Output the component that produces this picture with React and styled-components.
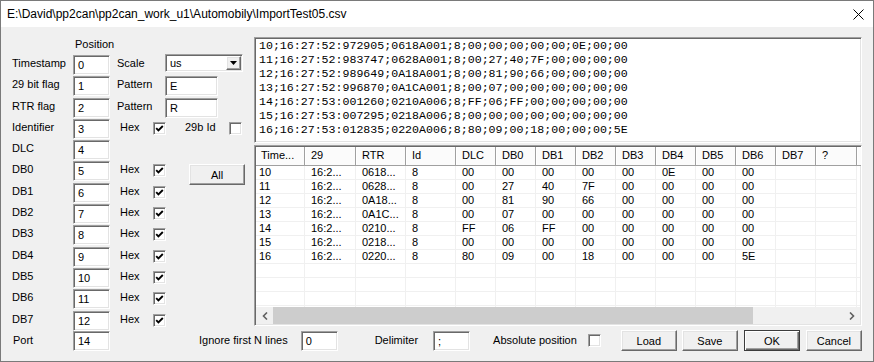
import React from 'react'
import styled, { createGlobalStyle, css } from 'styled-components'

// classic 3D borders
const sunken = css`
  border: 1px solid;
  border-color: #a0a0a0 #fff #fff #a0a0a0;
  box-shadow: inset 1px 1px 0 #696969, inset -1px -1px 0 #e3e3e3;
`
const raised = css`
  border: 1px solid;
  border-color: #fff #696969 #696969 #fff;
  box-shadow: inset -1px -1px 0 #a0a0a0, inset 1px 1px 0 #e3e3e3;
  background: #f0f0f0;
`

const GlobalStyle = createGlobalStyle`
  html, body { margin: 0; padding: 0; background: #fff; }
  * { box-sizing: border-box; }
`

const Window = styled.div`
  width: 874px;
  height: 362px;
  border: 1px solid #7a7a7a;
  display: flex;
  flex-direction: column;
  background: #f0f0f0;
  color: #000;
  font-family: 'Liberation Sans', Arial, sans-serif;
  font-size: 11px;
  overflow: hidden;
`
const TitleBar = styled.div`
  height: 26px;
  flex-shrink: 0;
  background: #fff;
  display: flex;
  align-items: center;
  justify-content: space-between;
  padding: 0 9px 0 6px;
  font-size: 12px;
`
const Body = styled.div`
  flex: 1;
  display: flex;
  flex-direction: column;
  padding: 10px 11px 0 11px;
`
const Top = styled.div`
  display: flex;
  height: 293px;
`
const LeftForm = styled.div`
  width: 242px;
  display: flex;
  flex-direction: column;
`
const PositionHead = styled.div`
  height: 18px;
  line-height: 14px;
  padding-left: 63px;
  flex-shrink: 0;
`
const FormRow = styled.div`
  display: flex;
  align-items: flex-start;
  height: 21.3px;
  flex-shrink: 0;
`
const RowLabel = styled.div`
  width: ${p => p.$w || 61}px;
  padding-left: ${p => p.$pl || 0}px;
  line-height: 17px;
  white-space: nowrap;
`
const Caption = styled.div`
  width: ${p => p.$w}px;
  margin-left: ${p => p.$ml || 0}px;
  line-height: 17px;
  white-space: nowrap;
`
const TextField = styled.div`
  ${sunken};
  background: #fff;
  width: ${p => p.$w || 37}px;
  height: 20px;
  padding: 2px 0 0 4px;
  line-height: 14px;
  margin-left: ${p => p.$ml || 0}px;
  flex-shrink: 0;
`
const Box = styled.div`
  ${sunken};
  background: #fff;
  width: 13px;
  height: 13px;
  margin-top: ${p => (p.$flat ? 0 : 3)}px;
  margin-left: ${p => p.$ml || 0}px;
  display: flex;
  align-items: center;
  justify-content: center;
  flex-shrink: 0;
`
const Dropdown = styled.div`
  ${sunken};
  background: #fff;
  width: 78px;
  height: 18px;
  margin-top: -1px;
  display: flex;
  align-items: center;
  justify-content: space-between;
  padding: 0 1px 0 4px;
`
const DropButton = styled.div`
  ${raised};
  width: 15px;
  height: 14px;
  display: flex;
  align-items: center;
  justify-content: center;
`
const PushButton = styled.div`
  ${raised};
  width: 56px;
  height: 21px;
  display: flex;
  align-items: center;
  justify-content: center;
  margin-left: ${p => p.$ml || 0}px;
  margin-top: ${p => p.$mt || 0}px;
  flex-shrink: 0;
  ${p =>
    p.$default &&
    css`
      border-color: #3c3c3c;
      box-shadow: inset 1px 1px 0 #fff, inset -1px -1px 0 #696969,
        inset -2px -2px 0 #a0a0a0;
    `}
`
const RightPanel = styled.div`
  width: 608px;
  display: flex;
  flex-direction: column;
  gap: 2px;
`
const TextBox = styled.div`
  ${sunken};
  background: #fff;
  height: 106px;
  padding: 1px 0 0 4px;
  font-family: 'Liberation Mono', 'Courier New', monospace;
  font-size: 11.6px;
  line-height: 14px;
  white-space: pre;
  overflow: hidden;
`
const ListView = styled.div`
  ${sunken};
  background: #fff;
  height: 181px;
  padding: 1px;
  display: flex;
  flex-direction: column;
  overflow: hidden;
`
const COLS = [49, 51, 50, 50, 40, 40, 40, 40, 40, 40, 40, 40, 40, 41]
const gridCols = COLS.map(w => w + 'px').join(' ') + ' 1fr'

const HeaderRow = styled.div`
  display: grid;
  grid-template-columns: ${gridCols};
  height: 19px;
  flex-shrink: 0;
`
const HeadCell = styled.div`
  border-right: 1px solid #a0a0a0;
  border-bottom: 1px solid #a0a0a0;
  box-shadow: inset 1px 1px 0 #fff;
  background: #fbfbfb;
  padding-left: ${p => (p.$first ? 5 : 6)}px;
  line-height: 17px;
  white-space: nowrap;
  overflow: hidden;
`
const Rows = styled.div`
  height: 141px;
  flex-shrink: 0;
  overflow: hidden;
`
const DataRow = styled.div`
  display: grid;
  grid-template-columns: ${gridCols};
  height: 14px;
`
const Cell = styled.div`
  border-right: 1px solid #f0f0f0;
  border-bottom: 1px solid #f0f0f0;
  padding-left: ${p => (p.$first ? 3 : 6)}px;
  line-height: 13px;
  white-space: nowrap;
  overflow: hidden;
`
const HScroll = styled.div`
  height: 17px;
  flex-shrink: 0;
  display: flex;
  background: #f0f0f0;
`
const ScrollArrow = styled.div`
  width: 17px;
  display: flex;
  align-items: center;
  justify-content: center;
`
const Track = styled.div`
  flex: 1;
  display: flex;
`
const Thumb = styled.div`
  width: 480px;
  background: #cdcdcd;
`
const BottomBar = styled.div`
  display: flex;
  align-items: center;
  height: 21px;
`

const LINES = [
  '10;16:27:52:972905;0618A001;8;00;00;00;00;00;0E;00;00',
  '11;16:27:52:983747;0628A001;8;00;27;40;7F;00;00;00;00',
  '12;16:27:52:989649;0A18A001;8;00;81;90;66;00;00;00;00',
  '13;16:27:52:996870;0A1CA001;8;00;07;00;00;00;00;00;00',
  '14;16:27:53:001260;0210A006;8;FF;06;FF;00;00;00;00;00',
  '15;16:27:53:007295;0218A006;8;00;00;00;00;00;00;00;00',
  '16;16:27:53:012835;0220A006;8;80;09;00;18;00;00;00;5E',
]
const HEADERS = ['Time...', '29', 'RTR', 'Id', 'DLC', 'DB0', 'DB1', 'DB2', 'DB3', 'DB4', 'DB5', 'DB6', 'DB7', '?', '']

const clip = s => s.slice(0, 4) + '...'
const tableRows = LINES.map(l => {
  const f = l.split(';')
  return [f[0], clip(f[1]), clip(f[2]), ...f.slice(3), '', '']
})
while (tableRows.length < 11) tableRows.push(Array(15).fill(''))

const Check = () => (
  <svg width='9' height='9' viewBox='0 0 9 9'>
    <polyline points='1.2,4.2 3.4,6.4 7.8,2' fill='none' stroke='#000' strokeWidth='1.9' />
  </svg>
)

const CloseIcon = () => (
  <svg width='11' height='11' viewBox='0 0 11 11'>
    <path d='M0.5 0.5 L10.5 10.5 M10.5 0.5 L0.5 10.5' stroke='#000' strokeWidth='1' />
  </svg>
)

const Chevron = ({ right }) => (
  <svg width='6' height='8' viewBox='0 0 6 8'>
    <polyline
      points={right ? '1,0.5 4.5,4 1,7.5' : '5,0.5 1.5,4 5,7.5'}
      fill='none'
      stroke='#606060'
      strokeWidth='1.6'
    />
  </svg>
)

const DB_ROWS = [
  ['DB0', '5'],
  ['DB1', '6'],
  ['DB2', '7'],
  ['DB3', '8'],
  ['DB4', '9'],
  ['DB5', '10'],
  ['DB6', '11'],
  ['DB7', '12'],
]

export default function App() {
  return (
    <>
      <GlobalStyle />
      <Window>
        <TitleBar>
          <span>{'E:\\David\\pp2can\\pp2can_work_u1\\Automobily\\ImportTest05.csv'}</span>
          <CloseIcon />
        </TitleBar>

        <Body>
          <Top>
            {/* field positions */}
            <LeftForm>
              <PositionHead>Position</PositionHead>
              <FormRow>
                <RowLabel>Timestamp</RowLabel>
                <TextField>0</TextField>
                <Caption $ml={7} $w={48}>Scale</Caption>
                <Dropdown>
                  <span>us</span>
                  <DropButton>
                    <svg width='7' height='4' viewBox='0 0 7 4'>
                      <polygon points='0,0 7,0 3.5,4' fill='#000' />
                    </svg>
                  </DropButton>
                </Dropdown>
              </FormRow>
              <FormRow>
                <RowLabel>29 bit flag</RowLabel>
                <TextField>1</TextField>
                <Caption $ml={7} $w={48}>Pattern</Caption>
                <TextField $w={53}>E</TextField>
              </FormRow>
              <FormRow>
                <RowLabel>RTR flag</RowLabel>
                <TextField>2</TextField>
                <Caption $ml={7} $w={48}>Pattern</Caption>
                <TextField $w={53}>R</TextField>
              </FormRow>
              <FormRow>
                <RowLabel>Identifier</RowLabel>
                <TextField>3</TextField>
                <Caption $ml={10} $w={33}>Hex</Caption>
                <Box><Check /></Box>
                <Caption $ml={19} $w={44}>29b Id</Caption>
                <Box />
              </FormRow>
              <FormRow>
                <RowLabel>DLC</RowLabel>
                <TextField>4</TextField>
              </FormRow>
              {DB_ROWS.map(([name, pos], i) => (
                <FormRow key={name}>
                  <RowLabel>{name}</RowLabel>
                  <TextField>{pos}</TextField>
                  <Caption $ml={10} $w={33}>Hex</Caption>
                  <Box><Check /></Box>
                  {i === 0 && <PushButton $ml={23} $mt={3}>All</PushButton>}
                </FormRow>
              ))}
            </LeftForm>

            {/* preview */}
            <RightPanel>
              <TextBox>{LINES.join('\n')}</TextBox>
              <ListView>
                <HeaderRow>
                  {HEADERS.map((h, i) => (
                    <HeadCell key={i} $first={i === 0}>{h}</HeadCell>
                  ))}
                </HeaderRow>
                <Rows>
                  {tableRows.map((r, ri) => (
                    <DataRow key={ri}>
                      {r.map((c, ci) => (
                        <Cell key={ci} $first={ci === 0}>{c}</Cell>
                      ))}
                    </DataRow>
                  ))}
                </Rows>
                <HScroll>
                  <ScrollArrow><Chevron /></ScrollArrow>
                  <Track><Thumb /></Track>
                  <ScrollArrow><Chevron right /></ScrollArrow>
                </HScroll>
              </ListView>
            </RightPanel>
          </Top>

          {/* bottom controls */}
          <BottomBar>
            <RowLabel $pl={1}>Port</RowLabel>
            <TextField>14</TextField>
            <Caption $ml={89}>Ignore first N lines</Caption>
            <TextField $ml={13}>0</TextField>
            <Caption $ml={37}>Delimiter</Caption>
            <TextField $ml={15}>;</TextField>
            <Caption $ml={23}>Absolute position</Caption>
            <Box $ml={11} $flat />
            <PushButton $ml={20}>Load</PushButton>
            <PushButton $ml={5}>Save</PushButton>
            <PushButton $ml={6} $default>OK</PushButton>
            <PushButton $ml={6}>Cancel</PushButton>
          </BottomBar>
        </Body>
      </Window>
    </>
  )
}
